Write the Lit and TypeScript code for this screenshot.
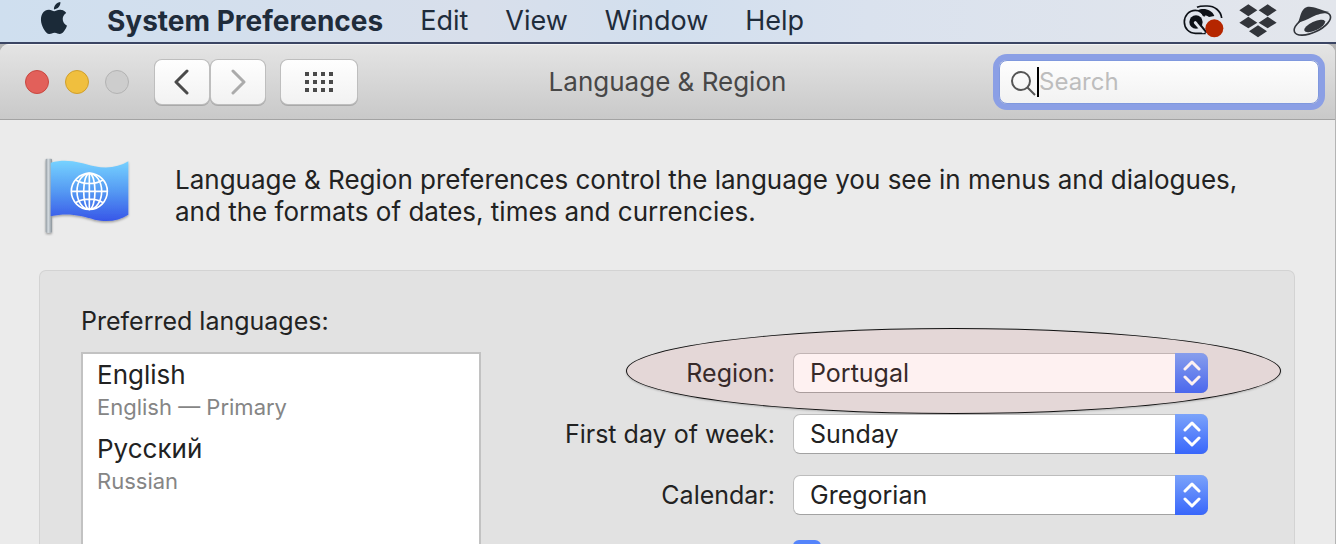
import { LitElement, html, css, svg } from "lit";
import { customElement, property } from "lit/decorators.js";

const control = css`
  * {
    box-sizing: border-box;
  }
  svg {
    display: block;
    flex: none;
  }
  button,
  input,
  select {
    font: inherit;
    color: inherit;
    margin: 0;
  }
`;

@customElement("menu-bar")
class MenuBar extends LitElement {
  static styles = [
    control,
    css`
      :host {
        display: block;
      }
      .bar {
        display: flex;
        align-items: center;
        height: 44px;
        padding: 0 3px 0 38px;
        border-bottom: 2px solid #3b4563;
        background: linear-gradient(90deg, #cfdfef, #d8dfeb 36%, #d2dfee 50%, #dae2ee 65%, #e3e6ec);
        color: #1f2c3b;
        font-size: 27px;
        line-height: 32px;
      }
      .menus {
        display: flex;
        gap: 37px;
        margin-left: 37px;
        flex: 1;
      }
      .menu {
        border: 0;
        padding: 0;
        background: none;
      }
      .app {
        font-size: 28px;
        font-weight: 700;
      }
      .tray {
        display: flex;
        align-items: center;
        gap: 15px;
      }
    `,
  ];

  render() {
    return html`
      <nav class="bar">
        <svg width="32" height="38" viewBox="0 0 24 28.5" fill="#1b2a38" aria-hidden="true">
          <path d="M12.152 6.896c-.948 0-2.415-1.078-3.96-1.04-2.04.027-3.91 1.183-4.961 3.014-2.117 3.675-.546 9.103 1.519 12.09 1.013 1.454 2.208 3.09 3.792 3.039 1.52-.065 2.09-.987 3.935-.987 1.831 0 2.35.987 3.96.948 1.637-.026 2.676-1.48 3.676-2.948 1.156-1.688 1.636-3.325 1.662-3.415-.039-.013-3.182-1.221-3.22-4.857-.026-3.04 2.48-4.494 2.597-4.559-1.429-2.09-3.623-2.324-4.39-2.376-2-.156-3.675 1.09-4.61 1.09zM15.53 3.83c.843-1.012 1.4-2.427 1.245-3.83-1.207.052-2.662.805-3.532 1.818-.78.896-1.454 2.338-1.273 3.714 1.338.104 2.715-.688 3.559-1.701" />
        </svg>
        <div class="menus">
          <button class="menu app">System Preferences</button>
          ${["Edit", "View", "Window", "Help"].map((m) => html`<button class="menu">${m}</button>`)}
        </div>
        <div class="tray">
          <svg width="41" height="34" viewBox="20 11 123 102" fill="none" stroke="#0d1117" aria-hidden="true">
            <path d="M62 21c10-5 20-4 31-4 22 0 40 14 43 36" stroke-width="5" />
            <path d="M64 30c16-8 42-4 50 17l-16 3c-8-6-14-4-19-4-3-8-8-13-15-16z" fill="#0d1117" stroke="none" />
            <path d="M88 99H57C38 99 24 84 24 65S38 30 57 30c14 0 22 7 28 18" stroke-width="5" />
            <circle cx="59" cy="65" r="20" fill="#0d1117" stroke="none" />
            <path d="M57 67l24 27" stroke="#e2e6ed" stroke-width="9" stroke-linecap="round" />
            <path d="M66 66l25 31" stroke-width="6" />
            <circle cx="114" cy="84" r="27" fill="#b52600" stroke="none" />
          </svg>
          <svg width="38" height="34" viewBox="0 0 114 102" fill="#32353b" aria-hidden="true">
            <path d="M28 1l27 18-27 18L1 19zM86 1l27 18-27 18-27-18zM28 38l27 18-27 17L1 56zM86 38l27 18-27 17-27-17zM57 64l27 18-27 18-27-18z" />
          </svg>
          <svg width="41" height="34" viewBox="354 10 123 102" aria-hidden="true">
            <ellipse cx="415" cy="69" rx="59" ry="26" transform="rotate(-25 415 69)" fill="#e3e6ec" stroke="#32353b" stroke-width="5" />
            <path d="M372 66c8-16 8-48 34-48 16 0 30 9 60 16-18 5-34 5-52 15-14 8-26 13-42 17z" fill="#32353b" />
            <ellipse cx="422" cy="76" rx="34" ry="13" transform="rotate(-25 422 76)" fill="#32353b" />
          </svg>
        </div>
      </nav>
    `;
  }
}

@customElement("window-toolbar")
class WindowToolbar extends LitElement {
  static styles = [
    control,
    css`
      :host {
        display: block;
      }
      .toolbar {
        display: grid;
        grid-template-columns: 1fr auto 1fr;
        align-items: center;
        height: 76px;
        padding: 0 16px;
        border-top: 1px solid #f4f4f4;
        border-bottom: 1px solid #a3a3a3;
        background: linear-gradient(#e4e4e4, #c9c9c9);
      }
      .left {
        display: flex;
        align-items: center;
        padding-left: 9px;
      }
      .lights {
        display: flex;
        gap: 16px;
        margin-right: 26px;
      }
      .light {
        width: 24px;
        height: 24px;
        padding: 0;
        border-radius: 50%;
        border: 1px solid #b3b3b3;
        background: #cdcdcd;
      }
      .close {
        background: #e2605a;
        border-color: #c9473f;
      }
      .minimise {
        background: #f0bf3e;
        border-color: #d09f2c;
      }
      .tool {
        display: grid;
        place-items: center;
        width: 54px;
        height: 44px;
        padding: 0;
        border: 0;
        border-radius: 7px;
        background: linear-gradient(#fefefe, #f2f2f2);
        box-shadow: 0 0 0 1px #bebebe, 0 1px 0 1px #a9a9a9;
        margin-right: 2px;
      }
      .wide {
        width: 76px;
        margin-left: 14px;
      }
      .title {
        margin: 0;
        font-size: 26px;
        font-weight: 400;
        line-height: 32px;
        color: #474747;
      }
      .search {
        justify-self: end;
        display: flex;
        align-items: center;
        width: 320px;
        max-width: 100%;
        height: 44px;
        padding-left: 10px;
        border: 1px solid #7f98de;
        border-radius: 8px;
        background: linear-gradient(#fefefe, #f2f2f2);
        box-shadow: 0 0 0 6px #8b9fe5;
      }
      .caret {
        width: 2px;
        height: 30px;
        background: #000;
      }
      .field {
        flex: 1;
        min-width: 0;
        padding: 0;
        border: 0;
        outline: 0;
        background: none;
        font-size: 24px;
        line-height: 32px;
        caret-color: transparent;
      }
      .field::placeholder {
        color: #bdbdbd;
        opacity: 1;
      }
    `,
  ];

  render() {
    return html`
      <header class="toolbar">
        <div class="left">
          <div class="lights">
            <button class="light close" aria-label="Close"></button>
            <button class="light minimise" aria-label="Minimise"></button>
            <button class="light" aria-label="Zoom" disabled></button>
          </div>
          <button class="tool" aria-label="Back">
            <svg width="16" height="26" viewBox="0 0 16 26" fill="none" stroke="#4a4a4a" stroke-width="3" stroke-linecap="round" stroke-linejoin="round"><path d="M13 2L2 13l11 11" /></svg>
          </button>
          <button class="tool" aria-label="Forward" disabled>
            <svg width="16" height="26" viewBox="0 0 16 26" fill="none" stroke="#ababab" stroke-width="3" stroke-linecap="round" stroke-linejoin="round"><path d="M3 2l11 11L3 24" /></svg>
          </button>
          <button class="tool wide" aria-label="Show All">
            <svg width="28" height="20" viewBox="0 0 28 20" fill="#4a4a4a">
              ${[0, 8, 16].map((y) => [0, 8, 16, 24].map((x) => svg`<rect x=${x} y=${y} width="4" height="4" />`))}
            </svg>
          </button>
        </div>
        <h1 class="title">Language &amp; Region</h1>
        <label class="search">
          <svg width="27" height="28" viewBox="0 0 27 28" fill="none" stroke="#555" stroke-width="2" aria-hidden="true"><circle cx="11" cy="13" r="9" /><path d="M17 19l8 8" /></svg>
          <span class="caret"></span>
          <input class="field" type="text" placeholder="Search" aria-label="Search" />
        </label>
      </header>
    `;
  }
}

@customElement("popup-row")
class PopupRow extends LitElement {
  @property() label = "";
  @property({ type: Array }) options: string[] = [];
  @property({ type: Boolean }) marked = false;

  static styles = [
    control,
    css`
      :host {
        display: block;
      }
      .row {
        position: relative;
        display: grid;
        grid-template-columns: minmax(0, 294fr) minmax(0, 415fr);
        gap: 18px;
        align-items: center;
        height: 40px;
      }
      .label {
        text-align: right;
        white-space: nowrap;
      }
      .popup {
        display: grid;
        grid-template-columns: minmax(0, 1fr) 33px;
        height: 40px;
      }
      .select {
        grid-area: 1 / 1 / 2 / 3;
        width: 100%;
        height: 40px;
        padding: 0 40px 0 16px;
        border: 1px solid #bdbdbd;
        border-bottom-color: #a2a2a2;
        border-radius: 7px;
        background: #fff;
        appearance: none;
        outline: 0;
      }
      .stepper {
        grid-area: 1 / 2;
        display: grid;
        place-items: center;
        border-radius: 0 7px 7px 0;
        background: linear-gradient(#7ba3fa, #3866fb);
        pointer-events: none;
      }
      .mark {
        position: absolute;
        inset: -25px -73px -21px 20%;
        border: 1px solid #111;
        border-radius: 50%;
        background: rgba(246, 115, 120, 0.1);
        box-shadow: 0 1px 2px rgba(0, 0, 0, 0.2);
        pointer-events: none;
      }
    `,
  ];

  render() {
    return html`
      <div class="row">
        <label class="label" for="choice">${this.label}</label>
        <div class="popup">
          <select class="select" id="choice">
            ${this.options.map((o) => html`<option>${o}</option>`)}
          </select>
          <span class="stepper">
            <svg width="18" height="28" viewBox="0 0 18 28" fill="none" stroke="#fff" stroke-width="3" stroke-linecap="round" stroke-linejoin="round"><path d="M2 10l7-7 7 7M2 18l7 7 7-7" /></svg>
          </span>
        </div>
        ${this.marked ? html`<span class="mark"></span>` : null}
      </div>
    `;
  }
}

@customElement("app-root")
class AppRoot extends LitElement {
  static styles = [
    control,
    css`
      :host {
        display: flex;
        flex-direction: column;
        height: 100vh;
        overflow: hidden;
        background: #b4b4b4;
        color: #222;
        font-family: Inter, "Liberation Sans", sans-serif;
        font-size: 25px;
        line-height: 32px;
      }
      .window {
        flex: 1;
        min-height: 0;
        display: flex;
        flex-direction: column;
        margin-right: 1px;
        border-radius: 9px 9px 0 0;
        background: #ebebeb;
        overflow: hidden;
      }
      .intro {
        display: flex;
        align-items: center;
        gap: 43px;
        padding: 36px 40px 34px 42px;
      }
      .text {
        margin: 0;
        max-width: 1080px;
        font-size: 26px;
      }
      .panel {
        flex: 1;
        display: grid;
        grid-template-columns: minmax(0, 400fr) minmax(0, 727fr);
        margin: 0 40px 0 39px;
        padding: 0 86px 0 41px;
        border: 1px solid #d3d3d3;
        border-bottom: 0;
        border-radius: 7px 7px 0 0;
        background: #e2e2e2;
      }
      .languages {
        display: flex;
        flex-direction: column;
        padding-top: 34px;
      }
      .heading {
        margin: 0 0 15px;
        font-size: 25px;
        font-weight: 400;
      }
      .list {
        flex: 1;
        margin: 0;
        padding: 5px 14px;
        border: 2px solid #c2c2c2;
        border-bottom: 0;
        background: #fff;
        list-style: none;
      }
      .item {
        padding-bottom: 10px;
      }
      .name,
      .detail {
        display: block;
      }
      .name {
        font-size: 26px;
      }
      .detail {
        font-size: 22px;
        color: #858585;
      }
      .form {
        display: flex;
        flex-direction: column;
        gap: 21px;
        padding-top: 82px;
      }
      .option {
        display: grid;
        grid-template-columns: minmax(0, 294fr) minmax(0, 415fr);
        gap: 18px;
        padding-top: 4px;
      }
      .check {
        grid-column: 2;
        width: 28px;
        height: 28px;
        appearance: none;
        border-radius: 6px;
        background: #5484fb;
      }
    `,
  ];

  languages = [
    { name: "English", detail: "English — Primary" },
    { name: "Русский", detail: "Russian" },
  ];

  render() {
    return html`
      <menu-bar></menu-bar>
      <main class="window">
        <window-toolbar></window-toolbar>
        <section class="intro">
          <svg width="90" height="80" viewBox="66 50 270 240" aria-hidden="true">
            <defs>
              <linearGradient id="cloth" x1="0" y1="0" x2="0" y2="1">
                <stop offset="0" stop-color="#76d2ff" />
                <stop offset="0.5" stop-color="#559af3" />
                <stop offset="1" stop-color="#3756e8" />
              </linearGradient>
              <linearGradient id="pole" x1="0" y1="0" x2="1" y2="0">
                <stop offset="0" stop-color="#8b949b" />
                <stop offset="0.4" stop-color="#d5dce1" />
                <stop offset="1" stop-color="#8b949b" />
              </linearGradient>
              <filter id="shade" x="-10%" y="-10%" width="120%" height="125%">
                <feDropShadow dx="0" dy="4" stdDeviation="3" flood-color="#000" flood-opacity="0.35" />
              </filter>
            </defs>
            <g filter="url(#shade)">
              <rect x="77" y="58" width="19" height="222" rx="3" fill="url(#pole)" />
              <path d="M92 70c55-14 90 2 132 11 40 8 72 2 101-15v160c-28 18-61 24-101 15-42-11-76-22-132-10z" fill="url(#cloth)" />
            </g>
            <g fill="none" stroke="#fff" stroke-width="5">
              <circle cx="208" cy="156" r="54" />
              <ellipse cx="208" cy="156" rx="37" ry="54" />
              <ellipse cx="208" cy="156" rx="17" ry="54" />
              <path d="M208 102v108M154 156h108M167 122c22 14 60 14 82 0M167 190c22-14 60-14 82 0" />
            </g>
          </svg>
          <p class="text">
            Language &amp; Region preferences control the language you see in menus and dialogues, and the formats of dates, times and currencies.
          </p>
        </section>
        <section class="panel">
          <div class="languages">
            <h2 class="heading">Preferred languages:</h2>
            <ul class="list">
              ${this.languages.map(
                (l) => html`<li class="item"><span class="name">${l.name}</span><span class="detail">${l.detail}</span></li>`
              )}
            </ul>
          </div>
          <div class="form">
            <popup-row label="Region:" .options=${["Portugal"]} marked></popup-row>
            <popup-row label="First day of week:" .options=${["Sunday"]}></popup-row>
            <popup-row label="Calendar:" .options=${["Gregorian"]}></popup-row>
            <div class="option"><input class="check" type="checkbox" aria-label="24-Hour Time" checked /></div>
          </div>
        </section>
      </main>
    `;
  }
}
